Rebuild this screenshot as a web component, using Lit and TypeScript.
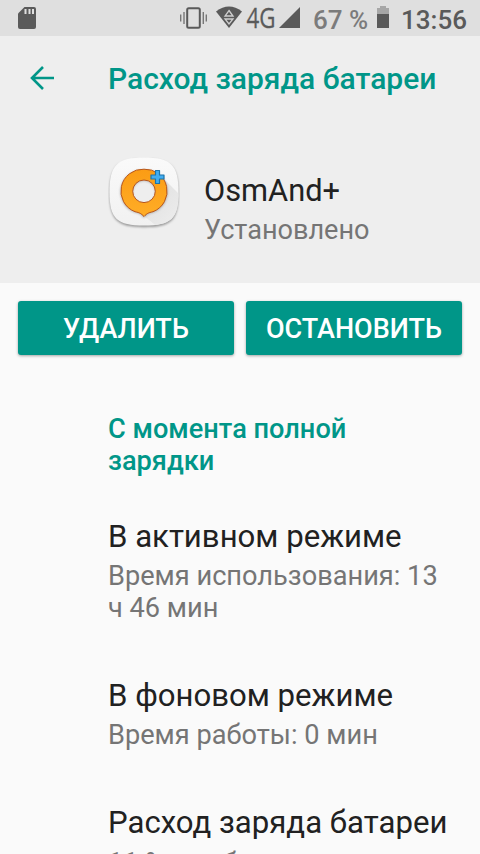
import { LitElement, html, css, svg } from "lit";
import { customElement } from "lit/decorators.js";

@customElement("app-root")
export class AppRoot extends LitElement {
  static styles = css`
    :host { display: block; width: 480px; height: 854px; overflow: hidden; background: #fafafa; font-family: Roboto, "Noto Sans", sans-serif; color: #212121; }
    svg { display: block; flex: none; }
    .status { height: 36px; background: #dfdfdf; display: flex; align-items: center; color: #5a5a5a; white-space: nowrap; }
    .sd { margin-left: 18px; }
    .tray { margin-left: 143px; }
    .pct { font-size: 26px; line-height: 36px; margin-left: 12px; padding-top: 3px; width: 59px; color: #7b7b7b; font-weight: 500; }
    .batt { margin-left: 5px; }
    .clock { font-size: 26px; line-height: 36px; font-weight: 500; margin-left: 12px; padding-top: 3px; }
    header { height: 247px; background: #eee; }
    .bar { display: flex; padding: 25px 0 0 30px; height: 36px; }
    .back { margin-top: 5px; }
    .title { margin: 0 0 0 54px; font-size: 30px; line-height: 36px; font-weight: 500; color: #009688; white-space: nowrap; }
    .app { display: flex; padding: 59px 0 0 108px; }
    .info { margin-left: 24px; padding-top: 17px; }
    .name { font-size: 31.15px; line-height: 36px; white-space: nowrap; }
    .info .name { font-size: 30.8px; }
    .sub { font-size: 27.2px; line-height: 32px; color: #757575; margin-top: 5px; white-space: nowrap; }
    .info .sub { font-size: 27.1px; }
    .buttons { display: flex; gap: 12px; padding: 18px 18px 0; }
    button { flex: 1; height: 54px; padding: 2px 0 0; border: 0; border-radius: 3px; background: #009688; color: #fff; font: 500 27px/52px Roboto, sans-serif; box-shadow: 0 1px 3px rgba(0,0,0,.35); }
    .list { padding-left: 108px; }
    h2 { margin: 58px 0 42px; font-size: 27.2px; line-height: 32px; font-weight: 500; color: #009688; }
    .item { margin-bottom: 54px; }
    .item:last-child .sub { margin-top: 6px; }
  `;

  item(name: string, lines: string[]) {
    return html`<div class="item"><div class="name">${name}</div><div class="sub">${lines.map((l, i) => html`${i ? html`<br>` : ""}${l}`)}</div></div>`;
  }

  appIcon() {
    return svg`<svg width="72" height="74" viewBox="0 0 72 74">
      <defs>
        <linearGradient id="tile" x1="0" y1="0" x2="0" y2="1"><stop offset="0" stop-color="#fafafa"/><stop offset="1" stop-color="#f1f1f1"/></linearGradient>
        <linearGradient id="pin" x1="0" y1="0" x2="0" y2="1"><stop offset="0" stop-color="#fb9c14"/><stop offset="1" stop-color="#ffad27"/></linearGradient>
        <linearGradient id="shade" x1="0" y1="0" x2="1" y2="1"><stop offset="0" stop-color="#dadada"/><stop offset="1" stop-color="#eee"/></linearGradient>
        <filter id="soft" x="-20%" y="-20%" width="140%" height="140%"><feGaussianBlur stdDeviation=".8"/></filter>
        <clipPath id="edge"><path d="M36 1.500C63 1.500 70.500 9 70.500 36S63 69.500 36 69.500 1.500 63 1.500 36 9 1.500 36 1.500Z"/></clipPath>
      </defs>
      <path d="M36 3C63 3 70.500 10 70.500 37.500S63 71.200 36 71.200 1.500 64 1.500 37.500 9 3 36 3Z" fill="#999" filter="url(#soft)"/>
      <path d="M36 1.500C63 1.500 70.500 9 70.500 36S63 69.500 36 69.500 1.500 63 1.500 36 9 1.500 36 1.500Z" fill="url(#tile)"/>
      <path d="M52 19 72 39V72H51L36 60 22 52Z" fill="url(#shade)" clip-path="url(#edge)"/>
      <circle cx="36" cy="35.500" r="12" fill="#eee"/>
      <path fill-rule="evenodd" d="M36 13A22 22 0 0 0 27 55.700C32 56.500 33 58 36 61 39 58 40 56.500 45 55.700A22 22 0 0 0 36 13ZM36 24A11.300 11.300 0 1 1 36 46.600 11.300 11.300 0 1 1 36 24Z" fill="#777" opacity=".5" transform="translate(0 1)" filter="url(#soft)"/>
      <path fill-rule="evenodd" d="M36 13.200A22 22 0 0 0 27 55.700C32 56.800 33 57.500 36 60.500 39 57.500 40 56.800 45 55.700A22 22 0 0 0 36 13.200ZM36 24A11.300 11.300 0 1 1 36 46.600 11.300 11.300 0 1 1 36 24Z" fill="url(#pin)" stroke="#b9571c" stroke-width="1"/>
      <path d="M47.500 14.500h4v4.500h4.500v4h-4.500v4.500h-4v-4.500h-4.500v-4h4.500Z" fill="#42adf0" stroke="#1c75ab" stroke-width="1.200" stroke-linejoin="round"/>
    </svg>`;
  }

  render() {
    return html`
      <div class="status">
        <svg class="sd" width="18" height="36" viewBox="0 0 18 36"><path d="M6.500 7H16Q18 7 18 9V27Q18 29 16 29H2Q0 29 0 27V13.500Z" fill="#5a5a5a"/><path d="M7.500 9v5M11.500 9v5M15 9v5" stroke="#dfdfdf" stroke-width="2"/></svg>
        <svg class="tray" width="122" height="36" viewBox="179 0 122 36">
          <rect x="187.200" y="8.200" width="12.600" height="19.600" rx="1.500" fill="none" stroke="#5a5a5a" stroke-width="2"/>
          <path d="M184 12v12M203.300 12v12M180.700 14.500v7M206.300 14.500v7" stroke="#777" stroke-width="1.400"/>
          <path d="M216 11.500Q229 1.500 242 11.500L229 28Z" fill="#5a5a5a"/>
          <path d="M229 10.500 233 16H225ZM225 19H233L229 24Z" fill="none" stroke="#d0d0d0" stroke-width="1.300"/>
          <text x="246.500" y="27.500" font-family="Open Sans" font-size="27" stroke="#5a5a5a" stroke-width=".3" textLength="29" lengthAdjust="spacingAndGlyphs" fill="#5a5a5a">4G</text>
          <path d="M300 7V28H279Z" fill="#5a5a5a"/>
        </svg>
        <span class="pct">67 %</span>
        <svg class="batt" width="12" height="36" viewBox="0 0 12 36"><path d="M3 6h6v2h3v6H0V8h3Z" fill="#a7a7a7"/><path d="M0 14h12v14H0Z" fill="#5a5a5a"/></svg>
        <span class="clock">13:56</span>
      </div>
      <header>
        <div class="bar">
          <svg class="back" width="24" height="24" viewBox="0 0 24 24"><path d="M24 12H2M13 1 2 12 13 23" fill="none" stroke="#009688" stroke-width="2.600"/></svg>
          <h1 class="title">Расход заряда батареи</h1>
        </div>
        <div class="app">
          ${this.appIcon()}
          <div class="info"><div class="name">OsmAnd+</div><div class="sub">Установлено</div></div>
        </div>
      </header>
      <div class="buttons"><button>УДАЛИТЬ</button><button>ОСТАНОВИТЬ</button></div>
      <div class="list">
        <h2>С момента полной<br>зарядки</h2>
        ${this.item("В активном режиме", ["Время использования: 13", "ч 46 мин"])}
        ${this.item("В фоновом режиме", ["Время работы: 0 мин"])}
        ${this.item("Расход заряда батареи", ["11 % от общего расхода"])}
      </div>`;
  }
}
